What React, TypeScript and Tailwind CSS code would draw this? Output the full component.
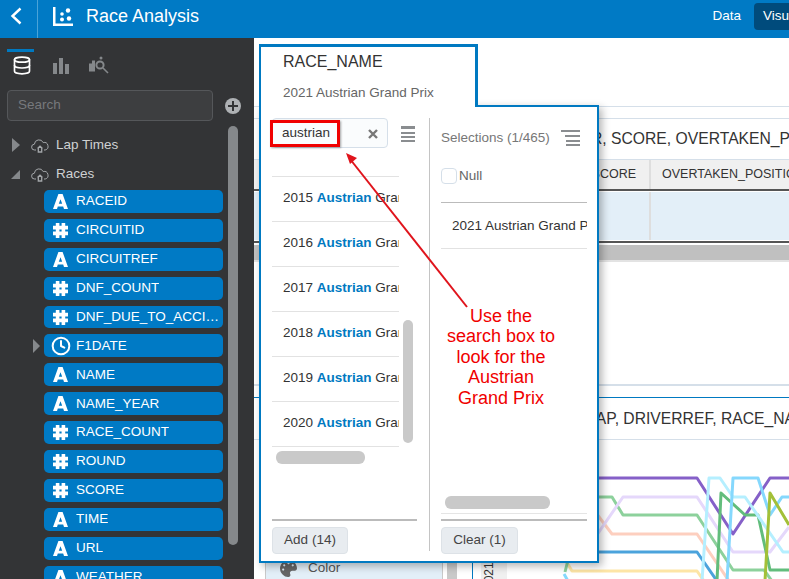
import { Database, Clock } from 'lucide-react';
import { FaPalette } from 'react-icons/fa';

type FieldType = 'text' | 'number' | 'date';

const fields: { name: string; type: FieldType; expandable?: boolean }[] = [
  { name: 'RACEID', type: 'text' },
  { name: 'CIRCUITID', type: 'number' },
  { name: 'CIRCUITREF', type: 'text' },
  { name: 'DNF_COUNT', type: 'number' },
  { name: 'DNF_DUE_TO_ACCIDENT', type: 'number' },
  { name: 'F1DATE', type: 'date', expandable: true },
  { name: 'NAME', type: 'text' },
  { name: 'NAME_YEAR', type: 'text' },
  { name: 'RACE_COUNT', type: 'number' },
  { name: 'ROUND', type: 'number' },
  { name: 'SCORE', type: 'number' },
  { name: 'TIME', type: 'text' },
  { name: 'URL', type: 'text' },
  { name: 'WEATHER', type: 'text' },
];

const years = ['2015', '2016', '2017', '2018', '2019', '2020'];

const chartLines = [
  { color: '#fde5a6', points: '566,561 572,571 697,571 704,581' },
  { color: '#4ba3dc', points: '590,552 697,552 717,581' },
  { color: '#fdcfbf', points: '590,505 612,534 697,534 729,581' },
  { color: '#8dd19c', points: '590,497 612,497 623,515 697,515 733,570 764,570 772,581' },
  { color: '#e5d8fb', points: '590,545 623,497 697,497 733,552 770,552 789,527' },
  { color: '#8560c8', points: '590,478 697,478 733,534 770,478 789,478' },
  { color: '#62bd7c', points: '717,581 721,493 745,515 758,515 770,570 789,570' },
  { color: '#b5efff', points: '702,581 709,478 720,478 733,497 745,497 783,552 789,552' },
  { color: '#85d8fd', points: '727,581 733,478 758,478 770,515 782,497 789,497' },
  { color: '#a3c038', points: '765,581 770,493 789,525' },
  { color: '#8dd19c', points: '568,560 565,572' },
  { color: '#85d8fd', points: '564,574 568,581' },
];

const FieldIcon = ({ type }: { type: FieldType }) => {
  if (type === 'date') return <Clock className="h-5 w-5 shrink-0 text-white" strokeWidth={2.4} />;
  if (type === 'number') {
    return (
      <svg viewBox="0 0 15 15" className="h-[15px] w-[15px]" fill="none" stroke="white" strokeWidth="3.6">
        <path d="M4.6 0v15M10.4 0v15M0 4.6h15M0 10.4h15" />
      </svg>
    );
  }
  return (
    <svg viewBox="0 0 15 15" className="h-[15px] w-[15px]" fill="white">
      <path fillRule="evenodd" d="M5.4 0h4.2L15 15h-4l-.8-2.6H4.8L4 15H0zM7.5 5.2 5.8 9.8h3.4z" />
    </svg>
  );
};

const CloudIcon = () => (
  <svg viewBox="0 0 18 15" className="h-[15px] w-[18px]" fill="none" stroke="#a4a7aa" strokeWidth="1">
    <path d="M5 12H3.6A2.9 2.9 0 0 1 3.4 6.2 4.6 4.6 0 0 1 12.2 4.6 3.7 3.7 0 0 1 14.2 12H13" />
    <path d="M6.5 10.5 9 8.2l2.5 2.3M7.3 10v4h3.4v-4" strokeWidth="1.3" />
  </svg>
);

const ListIcon = () => (
  <svg viewBox="0 0 14 16" className="h-4 w-[14px]" fill="#8a8d90">
    <rect y="0" width="14" height="3" />
    <rect y="6" width="14" height="2" />
    <rect y="10" width="14" height="2" />
    <rect y="14" width="14" height="2" />
  </svg>
);

const SelectedListIcon = () => (
  <svg viewBox="0 0 19 16" className="h-4 w-[19px]" fill="#8a8d90">
    <rect x="0" y="0" width="19" height="2" />
    <rect x="4" y="5" width="15" height="2" />
    <rect x="5" y="10" width="14" height="2" />
    <rect x="5" y="14" width="14" height="2" />
  </svg>
);

const Sidebar = () => (
  <aside className="flex h-full w-[254px] shrink-0 flex-col overflow-hidden bg-[#333436] pt-[11px]">
    <div className="ml-[7px] h-[3px] w-[27px] bg-[#0079c1]" />
    <div className="flex h-[36px] items-start pt-[3px]">
      <Database className="ml-[12px] h-[21px] w-[20px] text-white" strokeWidth={2} />
      <svg viewBox="0 0 16 16" className="ml-[21px] mt-[3px] h-4 w-4" fill="#85888b">
        <rect x="0" y="5" width="4" height="11" />
        <rect x="6" y="0" width="4" height="16" />
        <rect x="12" y="6" width="4" height="10" />
      </svg>
      <svg viewBox="0 0 20 18" className="ml-[20px] mt-[1px] h-[18px] w-5" fill="none" stroke="#85888b">
        <rect x="0.5" y="8" width="2" height="7" fill="#85888b" />
        <rect x="3.5" y="5" width="2" height="10" fill="#85888b" />
        <circle cx="11" cy="9" r="3.6" strokeWidth="2" />
        <circle cx="12" cy="2" r="1.5" fill="#85888b" stroke="none" />
        <path d="m14 12 5 5" strokeWidth="1.6" />
      </svg>
    </div>
    <div className="mt-[2px] flex items-center">
      <div className="ml-[7px] flex h-[31px] w-[206px] items-center rounded-sm border border-[#55575a] bg-[#3d3e40] px-[10px] text-[13.5px] text-[#77797c]">
        Search
      </div>
      <div className="relative ml-[12px] h-4 w-4 rounded-full bg-[#aeb1b4]">
        <div className="absolute left-[3px] top-[7px] h-[2px] w-[10px] bg-[#333436]" />
        <div className="absolute left-[7px] top-[3px] h-[10px] w-[2px] bg-[#333436]" />
      </div>
    </div>
    <div className="mt-[5px] flex min-h-0 flex-1">
      <div className="w-[228px] shrink-0 pt-[8px]">
        <div className="flex h-[22px] items-center pl-3">
          <div className="h-0 w-0 border-y-[7px] border-l-[8px] border-y-transparent border-l-[#85888b]" />
          <div className="ml-[11px]">
            <CloudIcon />
          </div>
          <span className="ml-[7px] text-[13.5px] text-[#cfd1d3]">Lap Times</span>
        </div>
        <div className="mt-[7px] flex h-[22px] items-center pl-[11px]">
          <div className="h-0 w-0 border-b-[9px] border-l-[9px] border-b-[#85888b] border-l-transparent" />
          <div className="ml-[11px]">
            <CloudIcon />
          </div>
          <span className="ml-[7px] text-[13.5px] text-[#cfd1d3]">Races</span>
        </div>
        <div className="mt-[5px] flex flex-col gap-[6px]">
          {fields.map((field) => (
            <div key={field.name} className="flex h-[22.9px] items-center pl-[33px]">
              <div className="w-[11px] shrink-0">
                {field.expandable && (
                  <div className="h-0 w-0 border-y-[7px] border-l-[7px] border-y-transparent border-l-[#85888b]" />
                )}
              </div>
              <div className="flex h-full w-[179px] items-center rounded-[5px] bg-[#007ac5] pl-[9px] text-[13.5px] text-white">
                <span className="flex w-[15px] shrink-0 justify-center">
                  <FieldIcon type={field.type} />
                </span>
                <span className="ml-2 truncate">{field.name}</span>
              </div>
            </div>
          ))}
        </div>
      </div>
      <div className="h-[419px] w-[10px] rounded-b-md rounded-t-md bg-[#85888b]" />
    </div>
  </aside>
);

const Workspace = () => (
  <main className="flex h-full min-w-0 flex-1 flex-col overflow-hidden bg-white pt-[68px] text-[#333]">
    <div className="h-[12px] shrink-0 border-t border-[#d5dfe9]" />
    <div className="flex h-[42px] shrink-0 items-center overflow-hidden whitespace-nowrap border-y border-[#d5dfe9] pl-[337px] text-[15.7px]">
      R, SCORE, OVERTAKEN_POSITION
    </div>
    <div className="flex h-[29px] shrink-0 bg-[#f0f0f0] text-[12.5px]">
      <div className="flex w-[397px] shrink-0 items-center justify-end border-r-2 border-[#dedede] pr-[13px]">SCORE</div>
      <div className="flex flex-1 items-center overflow-hidden whitespace-nowrap pl-[11px]">OVERTAKEN_POSITION</div>
    </div>
    <div className="h-[2px] shrink-0 bg-[#555]" />
    <div className="flex h-[50px] shrink-0 border-y border-white bg-[#e3eff8]">
      <div className="w-[397px] border-r-2 border-[#dedede]" />
    </div>
    <div className="h-[2px] shrink-0 bg-[#555]" />
    <div className="mt-[2px] h-[17px] shrink-0 border-b-2 border-[#e3e3e3] bg-[#c0c0c0]" />
    <div className="h-[124px] shrink-0 border-b-2 border-[#d5dfe9]" />
    <div className="h-[12px] shrink-0 border-b border-[#0079c1]" />
    <div className="flex h-[42px] shrink-0 items-center overflow-hidden whitespace-nowrap border-b border-[#d5dfe9] pl-[333px] text-[15.7px]">
      LAP, DRIVERREF, RACE_NAME
    </div>
    <div className="flex min-h-0 flex-1">
      <div className="w-[219px] shrink-0 border-r border-[#0079c1] pt-[114px]">
        <div className="flex">
          <div className="ml-[11px] flex h-7 w-[178px] items-center border-x border-[#c9c9c9] bg-[#e3eff8] pl-[14px] text-[13.5px] text-[#555]">
            <FaPalette className="h-[17px] w-[17px] text-[#666]" />
            <span className="ml-[11px]">Color</span>
          </div>
          <div className="ml-[4px] h-7 w-[10px] bg-[#c9c9c9]" />
        </div>
      </div>
      <div className="ml-[8px] flex w-[26px] shrink-0 justify-center overflow-hidden pt-[122px]">
        <div className="h-[28px] w-full shrink-0 rotate-180 bg-[#f0f0f0] text-center text-xs [writing-mode:vertical-rl]">
          2021
        </div>
      </div>
      <svg viewBox="507 440 282 139" className="h-[139px] w-[282px] shrink-0" fill="none">
        {chartLines.map((line) => (
          <polyline key={line.points} points={line.points} stroke={line.color} strokeWidth="3" strokeLinejoin="round" />
        ))}
      </svg>
    </div>
  </main>
);

const FilterPopup = () => (
  <div className="absolute left-[259px] top-[44px] z-10">
    <div className="relative z-10 -mb-[2px] h-[63px] w-[219px] border-l-2 border-r-[3px] border-t-[3px] border-[#0079c1] bg-white pl-[22px]">
      <div className="mt-[4px] text-base leading-[22px] text-[#333]">RACE_NAME</div>
      <div className="mt-[10px] text-[13.5px] leading-5 text-[#666]">2021 Austrian Grand Prix</div>
    </div>
    <div className="flex h-[458px] w-[340px] border-2 border-[#0079c1] bg-white shadow-[3px_3px_8px_rgba(0,0,0,0.3)]">
      <div className="relative w-[168px] shrink-0 pl-[11px] pt-[11px]">
        <div className="flex items-center">
          <div className="flex h-[30px] w-[116px] items-center justify-between rounded-sm border border-[#d5dfe9] bg-[#fafcfd] pl-[9px] pr-[9px] pt-[1px] text-[13.5px] text-[#333]">
            austrian
            <svg viewBox="0 0 10 10" className="h-[10px] w-[10px]" stroke="#777" strokeWidth="2.4">
              <path d="m1 1 8 8M9 1 1 9" />
            </svg>
          </div>
          <div className="ml-[13px] mt-[1px]">
            <ListIcon />
          </div>
        </div>
        <div className="mt-[28px] w-[127px] border-t border-[#e2e2e2]">
          {years.map((year) => (
            <div key={year} className="flex h-[45px] items-center overflow-hidden whitespace-nowrap border-b border-[#e2e2e2] pb-[1px] pl-[11px] text-[13.5px] text-[#333]">
              <span>
                {year} <b className="text-[#0079c1]">Austrian</b> Grand Prix
              </span>
            </div>
          ))}
        </div>
        <div className="absolute left-[142px] top-[213px] h-[123px] w-[10px] rounded-md bg-[#c9c9c9]" />
        <div className="absolute left-[15px] top-[344px] h-[13px] w-[89px] rounded-md bg-[#c9c9c9]" />
        <div className="absolute bottom-[40px] left-[11px] h-[2px] w-[145px] bg-[#bbb]" />
        <button className="absolute bottom-[7px] left-[11px] h-[27px] w-[76px] rounded-sm border border-[#dde2e7] bg-[#e8ecf0] text-[13.5px] text-[#444]">
          Add (14)
        </button>
      </div>
      <div className="relative flex-1 pl-[12px] pt-[16px] before:absolute before:left-0 before:top-[11px] before:h-[433px] before:w-[1px] before:bg-[#c4c4c4]">
        <div className="flex h-[30px] items-center text-[13.5px] text-[#777]">
          Selections (1/465)
          <div className="ml-[11px]">
            <SelectedListIcon />
          </div>
        </div>
        <div className="mt-[15px] flex h-4 items-center text-[13.5px] leading-4 text-[#666]">
          <div className="h-4 w-4 rounded-sm border border-[#d5dfe9]" />
          <span className="ml-[2px]">Null</span>
        </div>
        <div className="mt-[18px] w-[146px] border-y border-t-[#bbb] border-b-[#e2e2e2]">
          <div className="h-[45px] overflow-hidden whitespace-nowrap pl-[11px] pt-[13px] text-[13.5px] text-[#333]">2021 Austrian Grand Prix</div>
        </div>
        <div className="absolute left-[16px] top-[389px] h-[13px] w-[105px] rounded-md bg-[#c9c9c9]" />
        <div className="absolute bottom-[47px] left-[12px] h-[1px] w-[146px] bg-[#e5e5e5]" />
        <div className="absolute bottom-[40px] left-[12px] h-[2px] w-[146px] bg-[#bbb]" />
        <button className="absolute bottom-[7px] left-[12px] h-[27px] w-[77px] rounded-sm border border-[#dde2e7] bg-[#e8ecf0] text-[13.5px] text-[#444]">
          Clear (1)
        </button>
      </div>
    </div>
  </div>
);

const Annotation = () => (
  <>
    <div className="absolute left-[270px] top-[120px] z-20 h-[27px] w-[70px] border-[3px] border-[#f00000] shadow-[1px_1px_2px_rgba(0,0,0,0.35)]" />
    <svg viewBox="0 0 789 579" className="pointer-events-none absolute left-0 top-0 z-20 h-[579px] w-[789px]" fill="none">
      <path d="M467 307 350 159" stroke="#e0141c" strokeWidth="2" />
      <path d="m346 153 11 5-7 6z" fill="#e0141c" />
    </svg>
    <div className="absolute left-[431px] top-[306px] z-20 w-[140px] text-center text-[18px] leading-[20.4px] text-[#f00000]">
      Use the
      <br />
      search box to
      <br />
      look for the
      <br />
      Austrian
      <br />
      Grand Prix
    </div>
  </>
);

export default function App() {
  return (
    <div className="relative flex h-[579px] w-[789px] flex-col overflow-hidden font-['Liberation_Sans',sans-serif]">
      <header className="flex h-[38px] shrink-0 bg-[#007ac5] text-white">
        <div className="flex h-full w-[38px] shrink-0 items-center border-r border-[#4aa3d8] pb-[6px] pl-[10px]">
          <svg viewBox="0 0 12 18" className="h-[18px] w-3" fill="none" stroke="white" strokeWidth="2.4">
            <path d="M10.5 1.5 2.5 9l8 7.5" />
          </svg>
        </div>
        <div className="flex h-[32px] min-w-0 flex-1 items-center">
          <svg viewBox="0 0 20 19" className="ml-[15px] h-[19px] w-5" fill="white">
            <path d="M0 0h2.5v16.5H20V19H0z" />
            <circle cx="15" cy="3.5" r="2.2" />
            <circle cx="9" cy="7" r="1.8" />
            <circle cx="9" cy="12.5" r="2" />
            <circle cx="16" cy="11.5" r="2.2" />
          </svg>
          <span className="ml-[13px] text-lg">Race Analysis</span>
          <div className="ml-auto flex items-center overflow-hidden">
            <span className="text-[13.5px]">Data</span>
            <div className="ml-[13px] flex h-[27px] w-[35px] items-center overflow-hidden whitespace-nowrap rounded-l-[4px] bg-[#004b7c] pl-[9px] text-[13.5px]">
              Visualize
            </div>
          </div>
        </div>
      </header>
      <div className="flex min-h-0 flex-1">
        <Sidebar />
        <Workspace />
      </div>
      <FilterPopup />
      <Annotation />
    </div>
  );
}
